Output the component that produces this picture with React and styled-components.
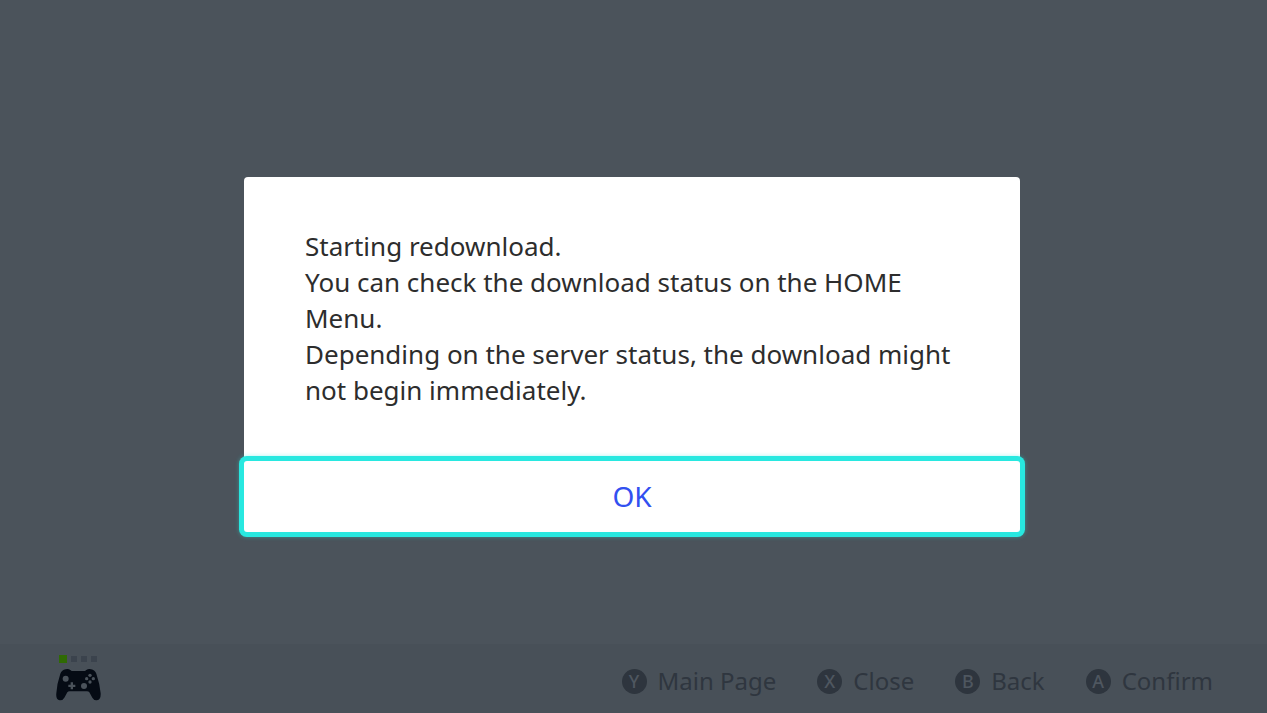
import React from 'react';
import styled, { createGlobalStyle } from 'styled-components';

const GlobalStyle = createGlobalStyle`
  * {
    box-sizing: border-box;
  }
  body {
    margin: 0;
    background: #4b535b;
    font-family: 'Noto Sans', 'Open Sans', sans-serif;
  }
`;

const Screen = styled.div`
  display: flex;
  flex-direction: column;
  justify-content: flex-end;
  min-height: 100vh;
`;

const Overlay = styled.div`
  position: fixed;
  inset: 0;
  display: flex;
  align-items: center;
  justify-content: center;
  padding: 0 3px 4px 0;
`;

const Dialog = styled.div`
  width: 100%;
  max-width: 776px;
  background: #fff;
  border-radius: 4px;
`;

const Message = styled.p`
  margin: 0;
  padding: 51px 61px 53px;
  color: #2d2d2d;
  font-size: 26px;
  line-height: 36px;
`;

const OkButton = styled.button`
  display: block;
  width: 100%;
  height: 71px;
  padding: 0 0 2px;
  border: 0;
  border-radius: 3px;
  background: #fff;
  color: #3250f0;
  font-family: inherit;
  font-size: 28px;
  line-height: 36px;
  outline: none;
  box-shadow: 0 0 0 5px #28e8e0, 0 0 4px 5px rgba(40, 232, 224, 0.4);
`;

const Footer = styled.footer`
  display: flex;
  justify-content: space-between;
  height: 69px;
  padding: 11px 54px 0 56px;
  background: #485058;
`;

const Player = styled.div`
  display: flex;
  flex-direction: column;
  gap: 6px;
`;

const Lights = styled.div`
  display: flex;
  align-items: center;
  gap: 4px;
  height: 8px;
  padding-left: 3px;
`;

const Light = styled.span`
  width: ${(props) => (props.$on ? '8px' : '6px')};
  height: ${(props) => (props.$on ? '8px' : '6px')};
  background: ${(props) => (props.$on ? '#2f6a04' : '#3b434d')};
`;

const Hints = styled.div`
  display: flex;
  align-items: flex-start;
  gap: 41px;
  padding-top: 8px;
`;

const HintButton = styled.button`
  display: flex;
  align-items: center;
  gap: 11px;
  padding: 0;
  border: 0;
  background: none;
  color: #2f363f;
  font-family: inherit;
  font-size: 24px;
  line-height: 36px;
`;

const Key = styled.span`
  width: 25px;
  height: 25px;
  border-radius: 50%;
  background: #2e353e;
  color: #4f5760;
  font-size: 18px;
  font-weight: 500;
  line-height: 25px;
  text-align: center;
`;

const hints = [
  { key: 'Y', label: 'Main Page' },
  { key: 'X', label: 'Close' },
  { key: 'B', label: 'Back' },
  { key: 'A', label: 'Confirm' }
];

function ControllerIcon() {
  return (
    <svg width="45" height="32" viewBox="47 101 135 96" aria-hidden="true">
      <path
        fill="#050b14"
        d="M76 102 Q84 100 90 104 L94 107 H134 L138 104 Q144 100 152 102 Q164 104 168 115 Q178 144 181 174 Q182 193 170 195 Q161 196 156 187 L147 171 Q145 168 140 168 H88 Q83 168 81 171 L72 187 Q67 196 58 195 Q46 193 48 174 Q50 144 60 115 Q64 104 76 102 Z"
      />
      <g fill="#4b535b">
        <circle cx="76" cy="130" r="9" />
        <circle cx="131" cy="152" r="9" />
        <path d="M91 141 h7 v7 h7 v7 h-7 v7 h-7 v-7 h-7 v-7 h7 z" />
        <circle cx="149" cy="120" r="5" />
        <circle cx="149" cy="140" r="5" />
        <circle cx="139" cy="130" r="5" />
        <circle cx="159" cy="130" r="5" />
      </g>
    </svg>
  );
}

function App() {
  return (
    <>
      <GlobalStyle />
      <Screen>
        <Footer>
          <Player>
            <Lights>
              <Light $on />
              <Light />
              <Light />
              <Light />
            </Lights>
            <ControllerIcon />
          </Player>
          <Hints>
            {hints.map((hint) => (
              <HintButton key={hint.key} type="button">
                <Key>{hint.key}</Key>
                {hint.label}
              </HintButton>
            ))}
          </Hints>
        </Footer>
      </Screen>
      <Overlay>
        <Dialog role="dialog" aria-modal="true" aria-labelledby="message">
          <Message id="message">
            Starting redownload.
            <br />
            You can check the download status on the HOME Menu.
            <br />
            Depending on the server status, the download might not begin immediately.
          </Message>
          <OkButton type="button">OK</OkButton>
        </Dialog>
      </Overlay>
    </>
  );
}

export default App;
